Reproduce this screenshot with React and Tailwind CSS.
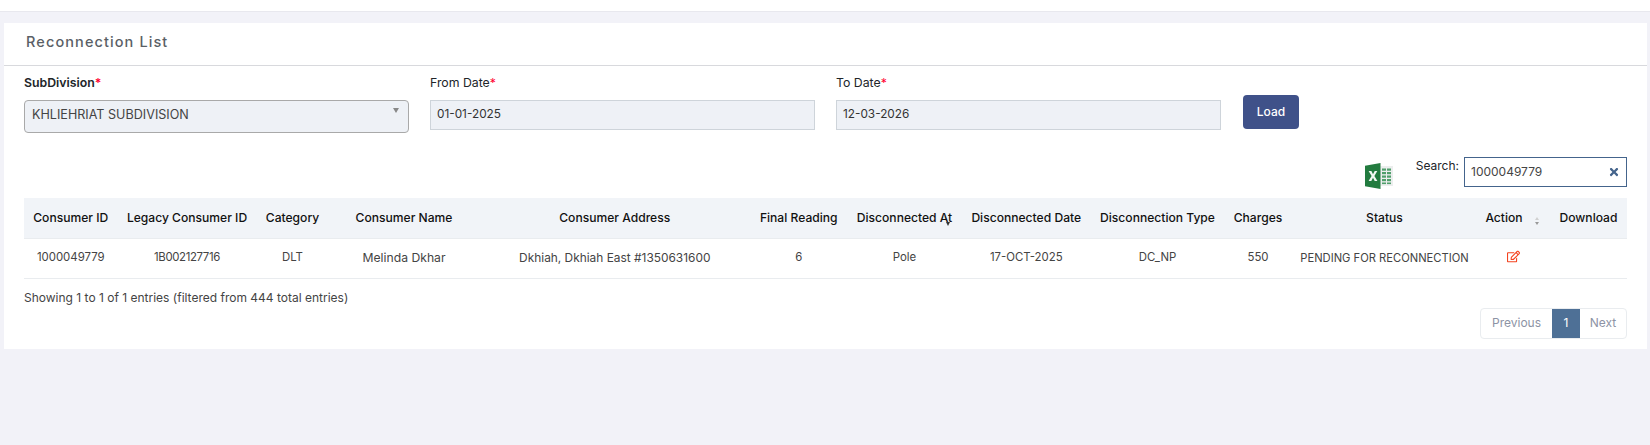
import React from "react";
import { FaRegEdit, FaTimes } from "react-icons/fa";

const cols = [93.5, 139, 72, 151, 270.5, 97.5, 114, 129.5, 133, 68, 185, 73, 77];
const heads = ["Consumer ID", "Legacy Consumer ID", "Category", "Consumer Name", "Consumer Address", "Final Reading", "Disconnected At", "Disconnected Date", "Disconnection Type", "Charges", "Status", "Action", "Download"];
const row = [
  ["1000049779", ""],
  ["1B002127716", "tracking-[-0.35px]"],
  ["DLT", ""],
  ["Melinda Dkhar", "text-[12.2px]"],
  ["Dkhiah, Dkhiah East #1350631600", "text-[11.9px]"],
  ["6", ""],
  ["Pole", ""],
  ["17-OCT-2025", ""],
  ["DC_NP", ""],
  ["550", ""],
  ["PENDING FOR RECONNECTION", "text-[11.2px]"],
];

function Excel() {
  return (
    <svg width="28" height="26" viewBox="0 0 28 26" className="mt-[6px] mr-[23px]">
      <rect x="13" y="3" width="15" height="20" fill="#eceeee" />
      <g fill="#4f9e6a">
        <rect x="17" y="5.5" width="4" height="2.2" /><rect x="22" y="5.5" width="4" height="2.2" />
        <rect x="17" y="9" width="4" height="2.2" /><rect x="22" y="9" width="4" height="2.2" />
        <rect x="17" y="12.5" width="4" height="2.2" /><rect x="22" y="12.5" width="4" height="2.2" />
        <rect x="17" y="16" width="4" height="2.2" /><rect x="22" y="16" width="4" height="2.2" />
        <rect x="17" y="19.5" width="4" height="1.6" /><rect x="22" y="19.5" width="4" height="1.6" />
      </g>
      <path d="M0 2.8 L15.5 0 L15.5 26 L0 23.2 Z" fill="#227b3f" />
      <path d="M3.6 8 L6.4 8 L8 11.2 L9.7 8 L12.3 8 L9.4 13 L12.4 18 L9.7 18 L8 14.8 L6.3 18 L3.6 18 L6.6 13 Z" fill="#f3f8f4" />
    </svg>
  );
}

function Label({ text, strong }) {
  return (
    <label className={`block h-[18px] text-[12.3px] leading-[18px] text-[#212529] ${strong ? "font-semibold" : "font-normal"}`}>
      {text}<span className="text-[#ff0033]">*</span>
    </label>
  );
}

function DateField({ label, value }) {
  return (
    <div className="w-[385px] shrink-0">
      <Label text={label} />
      <div className="mt-[8px] h-[30px] border border-[#ced4da] bg-[#eef1f6] px-[6px] text-[11.8px] leading-[27px] text-[#333]">{value}</div>
    </div>
  );
}

export default function App() {
  return (
    <div className="h-[445px] overflow-hidden bg-[#f2f2f8] font-[Inter,sans-serif]">
      <div className="h-[12px] border-b border-[#e8e8ee] bg-white" />
      <div className="ml-[4px] mr-[3px] mt-[11px] h-[326px] bg-white">
        <div className="flex h-[43px] items-center border-b border-[#d8d9dd] pb-[5px] pl-[22px] text-[14.5px] font-medium tracking-[1.1px] text-[#5a5f66]">
          Reconnection List
        </div>
        <div className="pl-[20px] pr-[20px]">
          <div className="flex items-start gap-[21px] pt-[8px]">
            <div className="w-[385px] shrink-0">
              <Label text="SubDivision" strong />
              <div className="relative mt-[8px] h-[33px] rounded-[4px] border border-[#a9a9a9] bg-[#eef1f6] pl-[7px] text-[12.6px] leading-[27px] text-[#444]">
                KHLIEHRIAT SUBDIVISION
                <span className="absolute right-[9px] top-[7px] h-0 w-0 border-x-[3.5px] border-t-[5px] border-x-transparent border-t-[#888]" />
              </div>
            </div>
            <DateField label="From Date" value="01-01-2025" />
            <DateField label="To Date" value="12-03-2026" />
            <button className="ml-px mt-[21px] h-[34px] w-[56px] rounded-[4px] bg-[#3f5189] text-[12px] font-medium text-white">Load</button>
          </div>
          <div className="mt-[24px] flex items-start justify-end">
            <Excel />
            <span className="mr-[5px] text-[12px] leading-[18px] text-[#212529]">Search:</span>
            <div className="flex h-[30px] w-[163px] items-center justify-between border border-[#44648c] pl-[6px] pr-[6px] text-[12px] text-[#444]">
              <span>1000049779</span>
              <FaTimes className="text-[12px] text-[#44648c]" />
            </div>
          </div>
          <table className="mt-[9px] w-[1603px] table-fixed border-collapse text-center text-[11.4px]">
            <colgroup>{cols.map((w, i) => <col key={i} style={{ width: w }} />)}</colgroup>
            <thead>
              <tr className="h-[40px] border-b border-[#e9ecef] bg-[#f1f4f8] text-[12.1px]">
                {heads.map((h) => (
                  <th key={h} className={`relative whitespace-nowrap p-0 font-medium text-[#111] ${h === "Action" ? "pr-[19px]" : ""}`}>
                    {h}
                    {h === "Disconnected At" && (
                      <span className="absolute left-[98px] top-[24px] h-0 w-0 border-x-[2.5px] border-t-[4px] border-x-transparent border-t-[#333]" />
                    )}
                    {h === "Action" && (
                      <span className="absolute left-[58px] top-[19px] flex flex-col gap-[2px]">
                        <span className="h-0 w-0 border-x-[2.5px] border-b-[3px] border-x-transparent border-b-[#d0d0d0]" />
                        <span className="h-0 w-0 border-x-[2.5px] border-t-[3px] border-x-transparent border-t-[#999]" />
                      </span>
                    )}
                  </th>
                ))}
              </tr>
            </thead>
            <tbody>
              <tr className="h-[40px] border-b border-[#e9ecef] text-[#444]">
                {row.map(([c, size]) => <td key={c} className={`whitespace-nowrap p-0 ${size}`}>{c}</td>)}
                <td className="p-0"><FaRegEdit className="mx-auto -mt-[3px] text-[13px] text-[#f4431f]" /></td>
                <td className="p-0" />
              </tr>
            </tbody>
          </table>
          <div className="mt-[10px] text-[12px] leading-[18px] text-[#444]">Showing 1 to 1 of 1 entries (filtered from 444 total entries)</div>
          <div className="mt-[1px] flex justify-end">
            <div className="flex h-[31px] overflow-hidden rounded-[4px] border border-[#e9ecef] text-[12px] text-[#8d93a5]">
              <span className="flex w-[71px] items-center justify-center">Previous</span>
              <span className="flex w-[28px] items-center justify-center bg-[#4e7096] text-white">1</span>
              <span className="flex w-[46px] items-center justify-center">Next</span>
            </div>
          </div>
        </div>
      </div>
    </div>
  );
}
